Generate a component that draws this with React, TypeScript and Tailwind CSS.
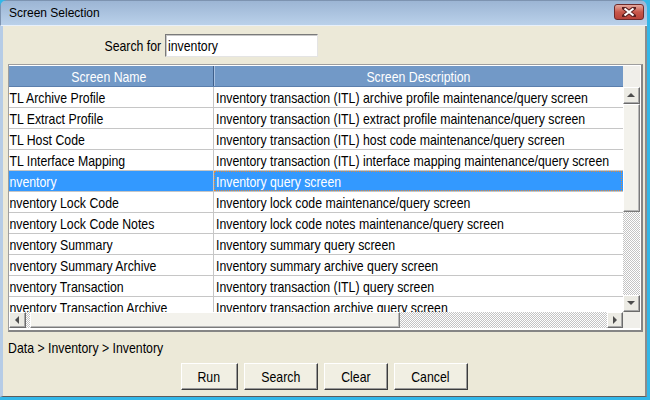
import { useState } from 'react'

const rows: [string, string][] = [
  ['ITL Archive Profile', 'Inventory transaction (ITL) archive profile maintenance/query screen'],
  ['ITL Extract Profile', 'Inventory transaction (ITL) extract profile maintenance/query screen'],
  ['ITL Host Code', 'Inventory transaction (ITL) host code maintenance/query screen'],
  ['ITL Interface Mapping', 'Inventory transaction (ITL) interface mapping maintenance/query screen'],
  ['Inventory', 'Inventory query screen'],
  ['Inventory Lock Code', 'Inventory lock code maintenance/query screen'],
  ['Inventory Lock Code Notes', 'Inventory lock code notes maintenance/query screen'],
  ['Inventory Summary', 'Inventory summary query screen'],
  ['Inventory Summary Archive', 'Inventory summary archive query screen'],
  ['Inventory Transaction', 'Inventory transaction (ITL) query screen'],
  ['Inventory Transaction Archive', 'Inventory transaction archive query screen'],
]

const font = "font-['Liberation_Sans',Arial,sans-serif] text-[15px] leading-[17px]"

const checker =
  'bg-[image:repeating-conic-gradient(#c4c4c4_0_25%,#ffffff_0_50%)] bg-[length:2px_2px]'

// 没有 Arial Narrow，只能把 Liberation Sans 横向压窄
function N({ children, align = 'left' }: { children: string; align?: 'left' | 'center' | 'right' }) {
  const origin = align === 'left' ? 'origin-left' : align === 'right' ? 'origin-right' : 'origin-center'
  return <span className={'inline-block whitespace-nowrap scale-x-[0.82] ' + origin}>{children}</span>
}

function Arrow({ dir }: { dir: 'up' | 'down' | 'left' | 'right' }) {
  const pts = {
    up: '0,4 4,0 8,4',
    down: '0,0 8,0 4,4',
    left: '4,0 4,8 0,4',
    right: '0,0 4,4 0,8',
  }[dir]
  const horiz = dir === 'left' || dir === 'right'
  return (
    <svg width={horiz ? 5 : 9} height={horiz ? 9 : 5} viewBox={horiz ? '0 0 5 9' : '0 0 9 5'}>
      <polygon points={pts} fill="#4d4d4d" />
    </svg>
  )
}

function ScrollButton({ dir, className = '' }: { dir: 'up' | 'down' | 'left' | 'right'; className?: string }) {
  return (
    <div
      className={
        'flex items-center justify-center bg-[#ecebe4] border border-t-white border-l-white border-r-[#6b6b6b] border-b-[#6b6b6b] shadow-[inset_-1px_-1px_0_#a8a8a8] ' +
        className
      }
    >
      <Arrow dir={dir} />
    </div>
  )
}

function Thumb({ className = '' }: { className?: string }) {
  return (
    <div
      className={
        'bg-[#f3f2ec] border border-t-white border-l-white border-r-[#7a7a7a] border-b-[#7a7a7a] shadow-[inset_-1px_-1px_0_#b8b8b8] ' +
        className
      }
    />
  )
}

function WinButton({ children, w }: { children: string; w: string }) {
  return (
    <button
      className={
        font +
        ' h-[27px] flex items-center justify-center text-black bg-[#f1efe3] border border-t-white border-l-white border-r-[#3c3c3c] border-b-[#3c3c3c] shadow-[inset_-1px_-1px_0_#9a9a9a] ' +
        w
      }
    >
      <N align="center">{children}</N>
    </button>
  )
}

export default function App() {
  const [selected, setSelected] = useState(4)

  return (
    <div className="w-[650px] h-[400px] bg-[#33b7e8] overflow-hidden">
      <div className="w-[647px] h-[397px] flex flex-col rounded-t-[7px] overflow-hidden">
        {/* 标题栏 */}
        <div className="h-[26px] flex items-center justify-between pl-[8px] pr-[3px] bg-gradient-to-b from-[#9cb5d4] to-[#bad1ea] border-t border-l border-[#7d93b0] border-b border-b-[#e8f0fa]">
          <span className="font-['Liberation_Sans',Arial,sans-serif] text-[12px] text-black">Screen Selection</span>
          <div className="w-[30px] h-[16px] mt-[-3px] rounded-[3px] flex items-center justify-center border border-[#6e2b2b] bg-gradient-to-b from-[#e5a99f] via-[#c8574a] to-[#b8433a]">
            <svg width="14" height="10" viewBox="0 0 14 10">
              <path d="M2 1 L12 9 M12 1 L2 9" stroke="#5a2020" strokeWidth="4" strokeLinecap="square" />
              <path d="M2.5 1.5 L11.5 8.5 M11.5 1.5 L2.5 8.5" stroke="#ffffff" strokeWidth="2.2" />
            </svg>
          </div>
        </div>

        {/* 主体 */}
        <div className="flex-1 flex flex-col bg-[#ece9d8] border-l-[3px] border-l-[#b6cce6] border-r-2 border-r-[#8c8c8c] border-b border-b-[#5c5c5c] pt-[8px]">
          <div className="flex items-center h-[23px]">
            <label className={font + ' w-[158px] text-right text-black'}>
              <N align="right">Search for</N>
            </label>
            <div
              className={
                font +
                ' ml-[4px] w-[153px] h-[23px] pl-[2px] flex items-center bg-white text-black border border-t-[#7a7a7a] border-l-[#7a7a7a] border-r-[#e4e4e4] border-b-[#e4e4e4] shadow-[inset_1px_1px_0_#c8c8c8]'
              }
            >
              <N>inventory</N>
            </div>
          </div>

          {/* 表格 */}
          <div className="ml-[5px] mr-[2px] mt-[7px] flex flex-col bg-white border-t border-l border-t-[#9e9e9e] border-l-[#9e9e9e] border-r-2 border-b-2 border-r-[#858585] border-b-[#858585] pt-px pr-px pb-[2px]">
            <div className="flex h-[21px]">
              <div className="w-[614px] overflow-hidden">
                <div className={font + ' flex h-[21px] ml-[-5px] text-white bg-[#7299c7] border-b border-b-[#5b7fad]'}>
                  <div className="w-[210px] flex items-center justify-center border-r border-r-[#3f5f8a]">
                    <N align="center">Screen Name</N>
                  </div>
                  <div className="w-[408px] flex items-center justify-center border-l border-l-[#a9c2e2]">
                    <N align="center">Screen Description</N>
                  </div>
                </div>
              </div>
              <div className="w-[17px] bg-[#f0efea]" />
            </div>

            <div className="flex h-[225px]">
              <div className="w-[614px] overflow-hidden">
                <div className={font + ' ml-[-5px] flex flex-col'}>
                  {rows.map(([name, desc], i) => {
                    const sel = i === selected
                    return (
                      <div
                        key={name}
                        onClick={() => setSelected(i)}
                        className={
                          'flex h-[21px] shrink-0 border-b border-b-[#c6c6c6] ' +
                          (sel ? 'bg-[#3399ff] text-white' : 'bg-white text-black')
                        }
                      >
                        <div className="w-[210px] pl-[2px] flex items-center overflow-hidden border-r border-r-[#c6c6c6]">
                          <N>{name}</N>
                        </div>
                        <div
                          className={
                            'w-[408px] pl-[2px] flex items-center overflow-hidden ' +
                            (sel ? 'outline outline-1 outline-dotted outline-[#e08a3c] outline-offset-[-1px]' : '')
                          }
                        >
                          <N>{desc}</N>
                        </div>
                      </div>
                    )
                  })}
                </div>
              </div>
              <div className="w-[17px] flex flex-col">
                <ScrollButton dir="up" className="h-[17px]" />
                <Thumb className="h-[108px]" />
                <div className={'flex-1 ' + checker} />
                <ScrollButton dir="down" className="h-[17px]" />
              </div>
            </div>

            <div className="flex h-[16px]">
              <div className="w-[614px] flex">
                <ScrollButton dir="left" className="w-[17px]" />
                <div className={'w-[4px] ' + checker} />
                <Thumb className="w-[370px]" />
                <div className={'flex-1 ' + checker} />
                <ScrollButton dir="right" className="w-[16px]" />
              </div>
              <div className="w-[17px] bg-[#f0efea]" />
            </div>
          </div>

          <div className={font + ' ml-[5px] mt-[7px] text-black'}>
            <N>Data &gt; Inventory &gt; Inventory</N>
          </div>

          <div className="flex justify-center gap-[6px] mt-[7px]">
            <WinButton w="w-[57px]">Run</WinButton>
            <WinButton w="w-[74px]">Search</WinButton>
            <WinButton w="w-[64px]">Clear</WinButton>
            <WinButton w="w-[74px]">Cancel</WinButton>
          </div>
        </div>
      </div>
    </div>
  )
}
